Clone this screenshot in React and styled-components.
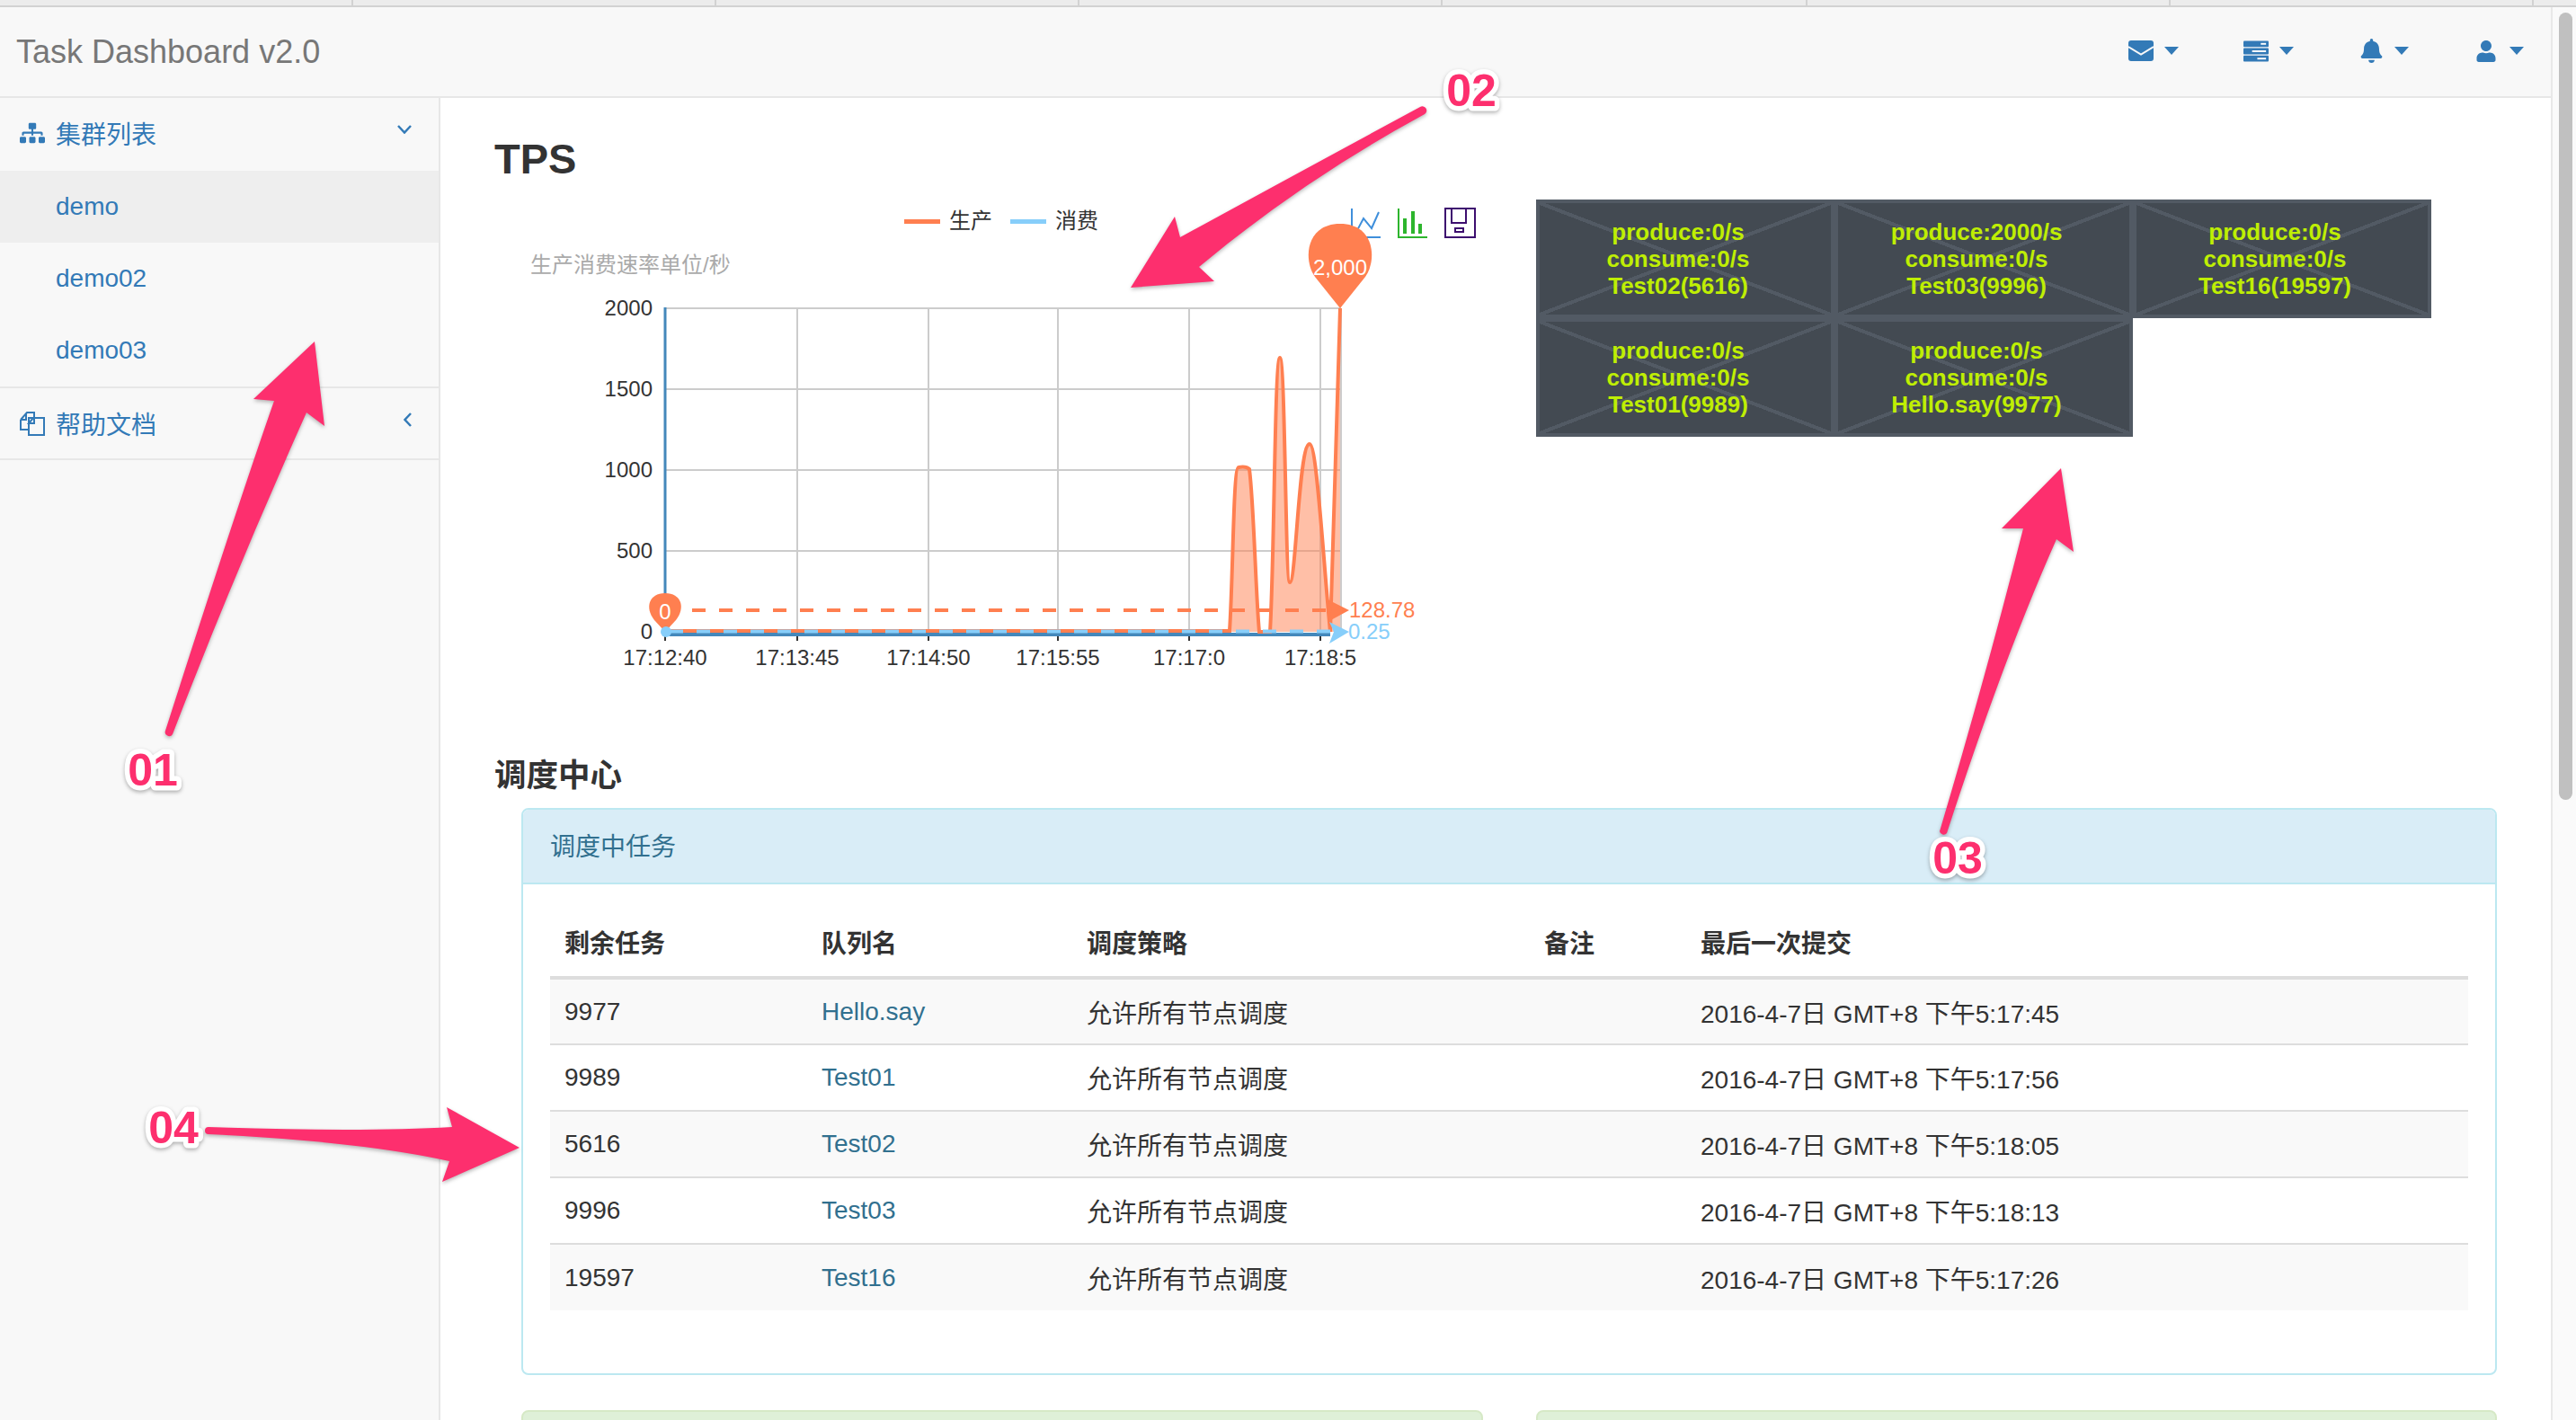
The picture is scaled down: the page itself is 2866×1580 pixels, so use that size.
import React from 'react';
import styled, { createGlobalStyle } from 'styled-components';
import { FaSitemap, FaBell, FaUser } from 'react-icons/fa';

const sans = '"Liberation Sans", "Noto Sans CJK SC", sans-serif';

const GlobalStyle = createGlobalStyle`
  html, body {
    margin: 0;
    padding: 0;
    width: 2866px;
    height: 1580px;
    overflow: hidden;
    background: #fff;
    font-family: ${sans};
    color: #333;
  }
  * { box-sizing: border-box; }
`;

const Page = styled.div`
  position: relative;
  width: 2866px;
  height: 1580px;
  overflow: hidden;
  display: flex;
  flex-direction: column;
`;

const TabStrip = styled.div`
  height: 8px;
  flex: none;
  display: flex;
  background: #ececec;
  border-bottom: 2px solid #d2d2d2;
`;

const Tab = styled.div`
  width: ${(p) => p.$w}px;
  flex: none;
  border-right: 2px solid #d2d2d2;
`;

const Shell = styled.div`
  flex: 1;
  min-height: 0;
  display: flex;
`;

const Main = styled.div`
  width: 2838px;
  flex: none;
  display: flex;
  flex-direction: column;
`;

const ScrollTrack = styled.div`
  flex: 1;
  background: #fafafa;
  border-left: 2px solid #e8e8e8;
  padding: 6px 4px 0 7px;
`;

const ScrollThumb = styled.div`
  height: 876px;
  border-radius: 8px;
  background: #c0c0c0;
`;

const Navbar = styled.div`
  height: 101px;
  flex: none;
  display: flex;
  align-items: center;
  justify-content: space-between;
  padding: 0 30px 0 18px;
  background: #f8f8f8;
  border-bottom: 2px solid #e7e7e7;
`;

const Brand = styled.div`
  font-size: 36px;
  color: #777;
`;

const NavIcons = styled.div`
  display: flex;
  margin-top: -2px;
`;

const NavItem = styled.div`
  width: 128px;
  display: flex;
  align-items: center;
  justify-content: flex-end;
  gap: 12px;
  color: #337ab7;
`;

const NavGlyph = styled.span`
  width: 28px;
  display: flex;
  justify-content: center;
`;

const Caret = styled.span`
  width: 0;
  height: 0;
  border-left: 8px solid transparent;
  border-right: 8px solid transparent;
  border-top: 9px solid #337ab7;
`;

const Body = styled.div`
  flex: 1;
  min-height: 0;
  display: flex;
`;

const Sidebar = styled.div`
  width: 490px;
  flex: none;
  background: #f8f8f8;
  border-right: 2px solid #e7e7e7;
`;

const SideHead = styled.div`
  height: ${(p) => p.$h}px;
  display: flex;
  align-items: center;
  gap: 12px;
  padding: 0 30px ${(p) => p.$lift || 0}px 22px;
  font-size: 28px;
  color: #337ab7;
  border-bottom: ${(p) => (p.$line ? '2px solid #e7e7e7' : 'none')};
`;

const SideGlyph = styled.span`
  width: 28px;
  display: flex;
  justify-content: center;
`;

const SideChevron = styled.svg`
  margin-left: auto;
  margin-top: -8px;
  fill: none;
  stroke: #337ab7;
  stroke-width: 2.5px;
`;

const SideItem = styled.div`
  height: 80px;
  display: flex;
  align-items: center;
  padding-left: 62px;
  font-size: 28px;
  color: #337ab7;
  background: ${(p) => (p.$active ? '#eeeeee' : 'transparent')};
`;

const SideGroup = styled.div`
  border-bottom: 2px solid #e7e7e7;
`;

const Content = styled.div`
  flex: 1;
  min-width: 0;
  overflow: hidden;
  padding: 44px 60px 0 60px;
`;

const Title = styled.h1`
  margin: 0;
  font-size: 47px;
  line-height: 47px;
  font-weight: bold;
  color: #333;
`;

const ChartRow = styled.div`
  display: flex;
  margin-left: 10px;
  gap: 49px;
`;

const ChartSvg = styled.svg`
  display: block;
  flex: none;
  width: 1100px;
  height: 560px;
`;

const ChartText = styled.text`
  font-family: ${sans};
  font-size: ${(p) => p.$size || 24}px;
  fill: ${(p) => p.$color || '#333'};
`;

const Treemap = styled.div`
  margin-top: 22px;
  width: 996px;
  height: 264px;
  display: grid;
  grid-template-columns: repeat(3, 332px);
  grid-auto-rows: 132px;
`;

const Cell = styled.div`
  display: flex;
  flex-direction: column;
  align-items: center;
  justify-content: center;
  padding-right: 16px;
  border: 4px solid #525a64;
  background-color: #434a52;
  background-image:
    linear-gradient(to top right, transparent calc(50% - 2px), #525a64 calc(50% - 2px), #525a64 calc(50% + 2px), transparent calc(50% + 2px)),
    linear-gradient(to bottom right, transparent calc(50% - 2px), #525a64 calc(50% - 2px), #525a64 calc(50% + 2px), transparent calc(50% + 2px));
  font-size: 26px;
  line-height: 30px;
  font-weight: bold;
  color: #bfee04;
`;

const SectionTitle = styled.h2`
  margin: 83px 0 16px;
  font-size: 35.5px;
  line-height: 40px;
  font-weight: bold;
  color: #333;
`;

const Panel = styled.div`
  margin-left: 30px;
  border: 2px solid #bce8f1;
  border-radius: 8px;
  overflow: hidden;
`;

const PanelHead = styled.div`
  height: 83px;
  display: flex;
  align-items: center;
  padding: 0 0 3px 30px;
  background: #d9edf7;
  border-bottom: 2px solid #bce8f1;
  font-size: 28px;
  color: #31708f;
`;

const PanelBody = styled.div`
  padding: 28px 30px 70px;
`;

const Table = styled.table`
  width: 100%;
  table-layout: fixed;
  border-collapse: collapse;
  font-size: 28px;
`;

const Th = styled.th`
  width: ${(p) => p.$w}px;
  height: 76px;
  padding: 0 16px 3px;
  text-align: left;
  font-weight: bold;
  font-size: 28px;
  border-bottom: 4px solid #ddd;
`;

const Tr = styled.tr`
  background: ${(p) => (p.$odd ? '#f9f9f9' : '#fff')};
  border-bottom: ${(p) => (p.$last ? 'none' : '2px solid #ddd')};
`;

const Td = styled.td`
  height: 74px;
  padding: 0 16px;
`;

const NameLink = styled.span`
  color: #31708f;
`;

const LowerRow = styled.div`
  margin: 39px 0 0 30px;
  display: flex;
  gap: 59px;
`;

const LowerPanel = styled.div`
  flex: ${(p) => (p.$w ? `0 0 ${p.$w}px` : 1)};
  height: 60px;
  background: #dff0d8;
  border: 2px solid #d6e9c6;
  border-radius: 8px;
`;

const Overlay = styled.svg`
  position: absolute;
  left: 0;
  top: 0;
  width: 2866px;
  height: 1580px;
  pointer-events: none;
`;

const Callout = styled.text`
  font-family: "Liberation Sans", sans-serif;
  font-size: 50px;
  font-weight: bold;
  fill: #fd2f6e;
  stroke: #fff;
  stroke-width: 11px;
  stroke-linejoin: round;
  paint-order: stroke;
  text-anchor: middle;
  dominant-baseline: central;
  filter: drop-shadow(0 2px 2px rgba(0, 0, 0, 0.3));
`;

const tabWidths = [393, 404, 404, 404, 406, 404, 404];

const gridX = [740, 887, 1033, 1177, 1323, 1469];
const gridY = [343, 433, 523, 613, 703];
const yLabels = ['2000', '1500', '1000', '500', '0'];
const xLabels = ['17:12:40', '17:13:45', '17:14:50', '17:15:55', '17:17:0', '17:18:5'];

const producePath =
  'C1372 640 1372 520 1378 520 C1384 519 1388 520 1390 522 C1395 560 1397 660 1401 703 L1413 703 C1418 620 1418 398 1424 398 C1430 398 1430 648 1435 648 C1442 648 1445 494 1457 494 C1465 494 1472 620 1480 703 C1483 600 1488 450 1491 343';

const cells = [
  ['produce:0/s', 'consume:0/s', 'Test02(5616)'],
  ['produce:2000/s', 'consume:0/s', 'Test03(9996)'],
  ['produce:0/s', 'consume:0/s', 'Test16(19597)'],
  ['produce:0/s', 'consume:0/s', 'Test01(9989)'],
  ['produce:0/s', 'consume:0/s', 'Hello.say(9977)'],
];

const rows = [
  ['9977', 'Hello.say', '2016-4-7日 GMT+8 下午5:17:45'],
  ['9989', 'Test01', '2016-4-7日 GMT+8 下午5:17:56'],
  ['5616', 'Test02', '2016-4-7日 GMT+8 下午5:18:05'],
  ['9996', 'Test03', '2016-4-7日 GMT+8 下午5:18:13'],
  ['19597', 'Test16', '2016-4-7日 GMT+8 下午5:17:26'],
];

const EnvelopeIcon = () => (
  <svg width="28" height="23" viewBox="0 0 28 23">
    <rect width="28" height="23" rx="3" fill="#337ab7" />
    <path d="M0 7 L14 15.5 L28 7" fill="none" stroke="#f8f8f8" strokeWidth="2" />
  </svg>
);

const ServerIcon = () => (
  <svg width="29" height="24" viewBox="0 0 29 24">
    <rect y="0" width="29" height="7" rx="1" fill="#337ab7" />
    <rect y="8.5" width="29" height="7" rx="1" fill="#337ab7" />
    <rect y="17" width="29" height="7" rx="1" fill="#337ab7" />
    <rect x="20" y="2.5" width="6" height="2" fill="#fff" />
    <rect x="10" y="11" width="16" height="2" fill="#fff" />
    <rect x="16" y="19.5" width="10" height="2" fill="#fff" />
  </svg>
);

const FilesIcon = () => (
  <svg width="28" height="28" viewBox="0 0 28 28" fill="none" stroke="#337ab7" strokeWidth="2">
    <path d="M1 10 L8 2 H16 V8 M1 10 V21 H10 M1 10 H7 V3" />
    <path d="M10 8 H27 V27 H10 Z" />
    <path d="M15 8 L10 14 H16 V8" />
  </svg>
);

const Chart = () => (
  <ChartSvg viewBox="560 200 1100 560">
    {/* legend */}
    <rect x="1006" y="244" width="40" height="5" fill="#ff7f50" />
    <ChartText x="1056" y="254">生产</ChartText>
    <rect x="1124" y="244" width="40" height="5" fill="#87cefa" />
    <ChartText x="1174" y="254">消费</ChartText>
    <ChartText x="590" y="303" $color="#aaa">生产消费速率单位/秒</ChartText>

    {/* toolbox */}
    <g fill="none" strokeWidth="2">
      <path d="M1504 232 V264 H1536 M1508 260 L1517 243 L1526 254 L1534 236" stroke="#3f8fdb" />
      <path d="M1556 232 V264 H1588" stroke="#2db52d" />
      <path d="M1608 232 H1641 V264 H1608 Z M1615 232 V248 H1631 V232 M1619 254 H1628 V258 H1619 Z" stroke="#3d0e6f" />
    </g>
    <g fill="#2db52d">
      <rect x="1561" y="243" width="4" height="17" />
      <rect x="1570" y="235" width="4" height="25" />
      <rect x="1578" y="249" width="4" height="11" />
    </g>

    {/* grid */}
    <g stroke="#ccc" strokeWidth="2">
      {gridY.slice(0, 4).map((y) => (
        <line key={y} x1="740" x2="1492" y1={y} y2={y} />
      ))}
      {gridX.slice(1).concat(1492).map((x) => (
        <line key={x} x1={x} x2={x} y1="343" y2="703" />
      ))}
    </g>

    {/* axes */}
    <line x1="740" x2="740" y1="342" y2="705" stroke="#4488bb" strokeWidth="3" />
    {gridX.map((x) => (
      <line key={x} x1={x} x2={x} y1="703" y2="713" stroke="#333" strokeWidth="2" />
    ))}
    {yLabels.map((t, i) => (
      <ChartText key={t} x="726" y={gridY[i] + 8} textAnchor="end">{t}</ChartText>
    ))}
    {xLabels.map((t, i) => (
      <ChartText key={t} x={gridX[i]} y="740" textAnchor="middle">{t}</ChartText>
    ))}

    {/* produce series */}
    <path d={`M1368 703 ${producePath} L1491 703 Z`} fill="#ff7f50" fillOpacity="0.5" />
    <line x1="740" x2="1480" y1="706" y2="706" stroke="#4488bb" strokeWidth="4" />
    <path d={`M740 702 H1368 ${producePath}`} fill="none" stroke="#ff7f50" strokeWidth="4" />
    <line x1="745" x2="1482" y1="702.5" y2="702.5" stroke="#87cefa" strokeWidth="4" strokeDasharray="15 15" />

    {/* average lines */}
    <line x1="770" x2="1482" y1="679" y2="679" stroke="#ff7f50" strokeWidth="4" strokeDasharray="15 15" />
    <path d="M1477 667 L1501 679 L1477 692 L1482 679 Z" fill="#ff7f50" />
    <path d="M1479 692 L1501 703 L1479 716 L1484 703 Z" fill="#87cefa" />
    <ChartText x="1501" y="687" $color="#ff7f50">128.78</ChartText>
    <ChartText x="1500" y="711" $color="#87cefa">0.25</ChartText>

    {/* pins */}
    <path d="M1491 343 L1463 308 C1450 290 1452 249 1491 249 C1530 249 1532 290 1519 308 Z" fill="#ff7f50" />
    <ChartText x="1491" y="306" textAnchor="middle" $color="#fff">2,000</ChartText>
    <path d="M740 703 L728 690 C717 676 722 660 740 660 C758 660 763 676 752 690 Z" fill="#ff7f50" />
    <ChartText x="740" y="689" textAnchor="middle" $color="#fff">0</ChartText>
    <circle cx="741" cy="703" r="6" fill="#87cefa" />
  </ChartSvg>
);

const Annotations = () => (
  <Overlay viewBox="0 0 2866 1580">
    <g fill="#fd2f6e" style={{ filter: 'drop-shadow(0 2px 2px rgba(0,0,0,0.28))' }}>
      <path d="M184 813 Q265 560 305 446 L282 444 L350 380 L361 474 L341 459 Q260 640 192 817 A4.5 4.5 0 0 1 184 813 Z" />
      <path d="M1580 119 Q1430 200 1313 264 L1307 241 L1258 320 L1351 313 L1334 297 Q1450 200 1585 127 A4.5 4.5 0 0 0 1580 119 Z" />
      <path d="M2158 925 Q2210 750 2251 588 L2227 588 L2293 521 L2307 614 L2288 600 Q2230 730 2166 927 A4.5 4.5 0 0 1 2158 925 Z" />
      <path d="M232 1254 Q400 1260 503 1254 L497 1232 L578 1277 L492 1315 L500 1292 Q400 1270 232 1262 A4 4 0 0 1 232 1254 Z" />
    </g>
    <Callout x="170" y="857">01</Callout>
    <Callout x="1637" y="101">02</Callout>
    <Callout x="2178" y="955">03</Callout>
    <Callout x="193" y="1255">04</Callout>
  </Overlay>
);

export default function App() {
  return (
    <Page>
      <GlobalStyle />
      <TabStrip>
        {tabWidths.map((w, i) => (
          <Tab key={i} $w={w} />
        ))}
      </TabStrip>
      <Shell>
        <Main>
          <Navbar>
            <Brand>Task Dashboard v2.0</Brand>
            <NavIcons>
              <NavItem><NavGlyph><EnvelopeIcon /></NavGlyph><Caret /></NavItem>
              <NavItem><NavGlyph><ServerIcon /></NavGlyph><Caret /></NavItem>
              <NavItem><NavGlyph><FaBell size={27} /></NavGlyph><Caret /></NavItem>
              <NavItem><NavGlyph><FaUser size={24} /></NavGlyph><Caret /></NavItem>
            </NavIcons>
          </Navbar>
          <Body>
            <Sidebar>
              <SideHead $h={81} $lift={3}>
                <SideGlyph><FaSitemap size={28} /></SideGlyph>
                集群列表
                <SideChevron width="16" height="10" viewBox="0 0 16 10">
                  <path d="M1 1 L8 8.5 L15 1" />
                </SideChevron>
              </SideHead>
              <SideGroup>
                <SideItem $active>demo</SideItem>
                <SideItem>demo02</SideItem>
                <SideItem>demo03</SideItem>
              </SideGroup>
              <SideHead $h={80} $line>
                <SideGlyph><FilesIcon /></SideGlyph>
                帮助文档
                <SideChevron width="9" height="16" viewBox="0 0 9 16">
                  <path d="M8 1 L1.5 8 L8 15" />
                </SideChevron>
              </SideHead>
            </Sidebar>
            <Content>
              <Title>TPS</Title>
              <ChartRow>
                <Chart />
                <Treemap>
                  {cells.map((lines, i) => (
                    <Cell key={i}>
                      {lines.map((l) => (
                        <div key={l}>{l}</div>
                      ))}
                    </Cell>
                  ))}
                </Treemap>
              </ChartRow>
              <SectionTitle>调度中心</SectionTitle>
              <Panel>
                <PanelHead>调度中任务</PanelHead>
                <PanelBody>
                  <Table>
                    <thead>
                      <tr>
                        <Th $w={286}>剩余任务</Th>
                        <Th $w={295}>队列名</Th>
                        <Th $w={509}>调度策略</Th>
                        <Th $w={174}>备注</Th>
                        <Th $w={870}>最后一次提交</Th>
                      </tr>
                    </thead>
                    <tbody>
                      {rows.map((r, i) => (
                        <Tr key={r[0]} $odd={i % 2 === 0} $last={i === rows.length - 1}>
                          <Td>{r[0]}</Td>
                          <Td><NameLink>{r[1]}</NameLink></Td>
                          <Td>允许所有节点调度</Td>
                          <Td />
                          <Td>{r[2]}</Td>
                        </Tr>
                      ))}
                    </tbody>
                  </Table>
                </PanelBody>
              </Panel>
              <LowerRow>
                <LowerPanel $w={1070} />
                <LowerPanel />
              </LowerRow>
            </Content>
          </Body>
        </Main>
        <ScrollTrack>
          <ScrollThumb />
        </ScrollTrack>
      </Shell>
      <Annotations />
    </Page>
  );
}
